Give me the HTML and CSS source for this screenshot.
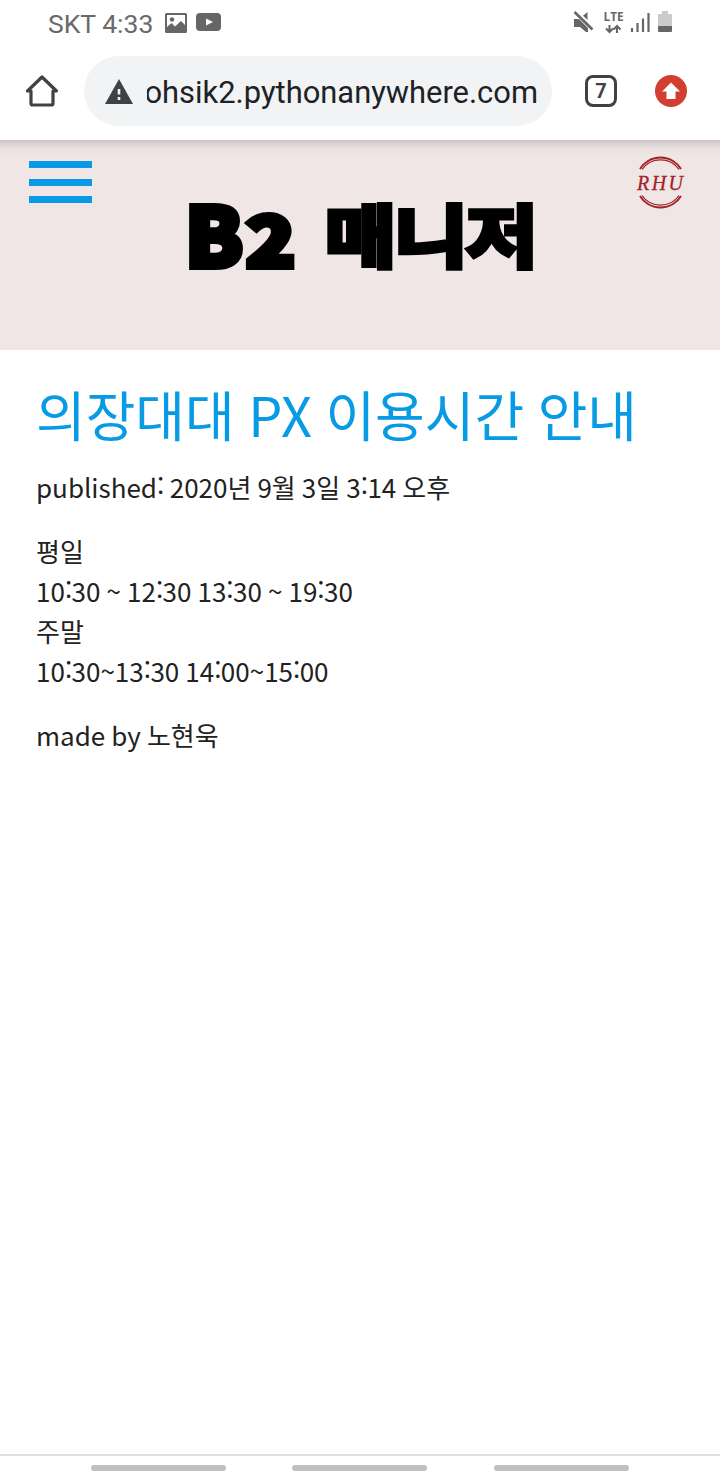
FILE: index.html
```html
<!DOCTYPE html>
<html lang="ko">
<head>
<meta charset="utf-8">
<title>B2 매니저</title>
<link rel="stylesheet" href="styles.css">
</head>
<body>
<div class="screen">
  <div class="status">
    <span class="carrier">SKT 4:33</span>
    <svg class="status-picture" width="22" height="20" viewBox="0 0 22 20"><path fill="#666" fill-rule="evenodd" d="M1.500 0h19Q22 0 22 1.500v17Q22 20 20.500 20h-19Q0 20 0 18.500v-17Q0 0 1.500 0zM2 2v12l4.500-4 3.500 3.500L16 8l4 4V2z"/><circle cx="7" cy="6.500" r="2.200" fill="#666"/></svg>
    <svg class="status-video" width="25" height="18" viewBox="0 0 25 18"><rect width="25" height="18" rx="4" fill="#666"/><path d="M10 5.500v7l7-3.500z" fill="#fff"/></svg>
    <svg class="status-right" width="102" height="24" viewBox="0 0 102 24">
      <path fill="#666" d="M1 8h5l9 9v4h-2l-6-5H1zM9 5.500L14.500 1v10.500z"/>
      <path stroke="#fff" stroke-width="3" d="M4 1l17 16"/>
      <path stroke="#666" stroke-width="2.600" d="M1.500 1l18 17.500"/>
      <text x="30.500" y="10" class="lte" textLength="20" lengthAdjust="spacingAndGlyphs">LTE</text>
      <path fill="none" stroke="#666" stroke-width="2" d="M36.500 14v7m-3.500-3.500l3.500 3.500 3.500-3.500M44 22v-7m-3.500 3.500L44 15l3.500 3.500"/>
      <path stroke="#666" stroke-width="2.200" d="M59 17v4M64.500 12v9M70 7.500v13.500M75.500 2v19"/>
      <path fill="#cbcbcb" d="M89 0h6v3h4v13H85V3h4z"/><path fill="#666" d="M85 15h14v5q0 1-1 1H86q-1 0-1-1z"/>
    </svg>
  </div>
  <div class="toolbar">
    <svg class="home" width="34" height="34" viewBox="0 0 34 34"><path fill="none" stroke="#3e4246" stroke-width="3.200" stroke-linejoin="round" d="M2.500 17L17 3l14.500 14H28v12.500q0 1.500-1.500 1.500h-19Q6 31 6 29.500V17z"/></svg>
    <div class="address">
      <svg width="28" height="25" viewBox="0 0 28 25"><path fill="#3e4246" d="M14 0l14 25H0z"/><path stroke="#f1f3f4" stroke-width="2.600" d="M14 10v5.500M14 18v3"/></svg>
      <div class="url"><span>ohsik2.pythonanywhere.com</span></div>
    </div>
    <div class="tabs">7</div>
    <svg class="update" width="32" height="32" viewBox="0 0 32 32"><circle cx="16" cy="16" r="16" fill="#d23f31"/><path fill="#fff" d="M16 7.500l9 9h-4.500V24h-9v-7.500H7z"/></svg>
  </div>
  <header class="banner">
    <div class="menu"><i></i><i></i><i></i></div>
    <svg class="title" width="352" height="76" viewBox="0 0 352 76">
      <text class="letter-b" x="0" y="67" textLength="58" lengthAdjust="spacingAndGlyphs">B</text>
      <text class="letter-2" x="61" y="67" textLength="49" lengthAdjust="spacingAndGlyphs">2</text>
      <text class="hangul" x="140" y="62" textLength="71" lengthAdjust="spacingAndGlyphs">매</text>
      <text class="hangul" x="209" y="62" textLength="74" lengthAdjust="spacingAndGlyphs">니</text>
      <text class="hangul" x="281" y="62" textLength="72" lengthAdjust="spacingAndGlyphs">저</text>
    </svg>
    <svg class="logo" width="54" height="54" viewBox="0 0 54 54">
      <g fill="none" stroke="#a32227"><path stroke-width="2" d="M7 13a24 24 0 0 1 41 0M7 40a24 24 0 0 0 41 0"/><path stroke-width="1.200" d="M9 13.500a22.500 22.500 0 0 1 37 0M9 39.500a22.500 22.500 0 0 0 37 0"/></g>
      <text class="initials" x="4" y="34" textLength="46">RHU</text>
    </svg>
  </header>
  <main>
    <h1>의장대대 PX 이용시간 안내</h1>
    <p>published<b>:</b> 2020년 9월 3일 3<b>:</b>14 오후</p>
    <p>평일<br>10<b>:</b>30 ~ 12<b>:</b>30 13<b>:</b>30 ~ 19<b>:</b>30<br>주말<br>10<b>:</b>30~13<b>:</b>30 14<b>:</b>00~15<b>:</b>00</p>
    <p>made by 노현욱</p>
  </main>
  <nav><i></i><i></i><i></i></nav>
</div>
</body>
</html>
```
FILE: styles.css
```css
* { box-sizing: border-box; }
body { margin: 0; background: #fff; font-family: "Noto Sans CJK KR", sans-serif; }
svg { display: block; flex: none; }
.screen { width: 720px; height: 1480px; display: flex; flex-direction: column; overflow: hidden; }
.status { height: 48px; flex: none; display: flex; align-items: flex-start; padding: 0 45px 0 48px; }
.carrier { width: 117px; font: 26.5px/47px Roboto, sans-serif; color: #6a6a6a; white-space: nowrap; }
.status-picture { margin-top: 13px; }
.status-video { margin: 13px 0 0 9px; }
.status-right { margin: 11px 0 0 auto; overflow: visible; }
.lte { font: 700 12.5px "Open Sans", sans-serif; fill: #666; }
.toolbar { height: 92px; flex: none; display: flex; align-items: center; padding: 8px 33px 14px 25px; }
.address { width: 468px; height: 70px; margin-left: 25px; border-radius: 35px; background: #f1f3f4; display: flex; align-items: center; padding-left: 21px; }
.url { width: 391px; margin: 4px 0 0 14px; overflow: hidden; display: flex; justify-content: flex-end; font: 30.9px/40px Roboto, sans-serif; color: #202124; white-space: nowrap; }
.tabs { width: 32px; height: 32px; margin-left: 33px; border: 3.5px solid #3e4246; border-radius: 8px; text-align: center; font: 700 20px/26px Roboto, sans-serif; color: #3e4246; }
.update { margin-left: 38px; }
.banner { height: 210px; flex: none; display: flex; background: linear-gradient(#c9c0c0, #ddd4d4 4px, #eae1e1 9px, #f0e6e6 16px); }
.menu { width: 63px; margin: 21px 0 0 29px; display: flex; flex-direction: column; gap: 10.5px; }
.menu i { height: 7px; background: #079ae5; }
.title { margin: 60px 0 0 93px; overflow: visible; }
.title text { font-family: "Noto Sans CJK KR", sans-serif; font-weight: 900; stroke: #000; stroke-width: 6px; }
.title .letter-b { font-size: 82px; }
.title .letter-2 { font-size: 69px; }
.title .hangul { font-size: 68px; font-weight: 700; stroke-width: 5px; }
.logo { margin: 16px 0 0 96px; }
.initials { font: italic 20px "Liberation Serif", serif; fill: #a32227; stroke: #a32227; stroke-width: .3px; }
main { flex: 1; padding: 26px 36px; color: #222; }
h1 { margin: 0; font-size: 54px; line-height: 76px; font-weight: 400; color: #079ae5; white-space: nowrap; word-spacing: -1.6px; }
p { margin: 0 0 24px; font-size: 26px; line-height: 40px; word-spacing: -1.2px; }
p b { font-weight: 400; line-height: 0; vertical-align: 2.5px; letter-spacing: -.6px; }
h1 + p { margin-top: 15px; }
nav { height: 26px; flex: none; border-top: 2px solid #dfdfdf; display: flex; gap: 66px; padding: 9px 0 0 91px; }
nav i { width: 135px; height: 6px; border-radius: 3px; background: #c0c0c0; }
nav i:last-child { margin-left: 1px; }
```
